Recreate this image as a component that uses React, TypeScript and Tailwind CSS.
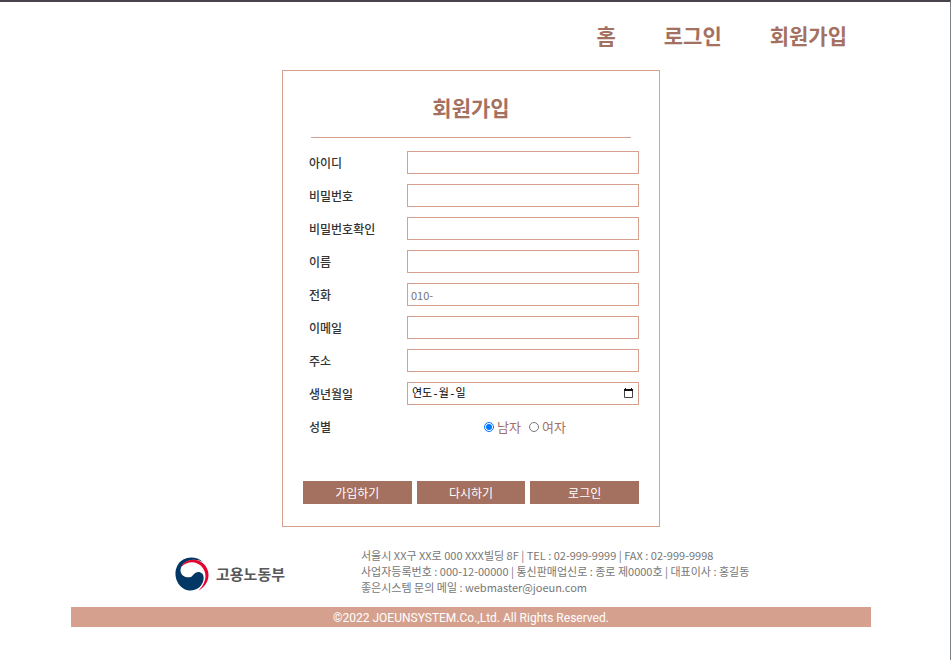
import React from "react";

type Field = { id: string; label: string; type: string; placeholder?: string };

const fields: Field[] = [
  { id: "userid", label: "아이디", type: "text" },
  { id: "password", label: "비밀번호", type: "password" },
  { id: "password2", label: "비밀번호확인", type: "password" },
  { id: "name", label: "이름", type: "text" },
  { id: "phone", label: "전화", type: "tel", placeholder: "010-" },
  { id: "email", label: "이메일", type: "email" },
  { id: "address", label: "주소", type: "text" },
];

const inputClass =
  "h-[23px] w-full border border-[#d5a18e] bg-white px-[3px] text-[11px] text-[#333] outline-none placeholder:text-[#757575]";

function Row({ id, label, children }: { id: string; label: string; children: React.ReactNode }) {
  return (
    <div className="flex h-[23px] items-center">
      <label htmlFor={id} className="w-[104px] shrink-0 pl-1.5 text-[12px] font-medium text-[#333]">
        {label}
      </label>
      <div className="relative min-w-0 flex-1">{children}</div>
    </div>
  );
}

function Emblem() {
  return (
    <svg viewBox="0 0 102 102" className="size-[34px] shrink-0" aria-hidden="true">
      <path
        d="M84 15C60 -6 22 -2 7 26C-8 56 8 92 38 100C64 104 86 86 86 62C86 48 73 41 62 47C53 52 52 61 41 61C26 61 14 50 17 36C22 10 56 0 84 15Z"
        fill="#003764"
      />
      <path
        d="M19 29C30 6 64 2 84 19C111 42 104 84 70 101C92 80 98 52 83 32C68 11 38 10 19 29Z"
        fill="#e4032e"
      />
    </svg>
  );
}

export default function App() {
  return (
    <div className="min-h-screen border-t-2 border-r border-t-[#48434c] border-r-[#7b8288] bg-white pr-2 font-['Noto_Sans_CJK_KR',sans-serif] text-[#a4705f]">
      <div className="mx-auto max-w-[800px]">
        <header>
          <nav className="flex h-[68px] items-center justify-end gap-12 pr-6 text-[21px] font-bold">
            <a href="#home">홈</a>
            <a href="#login">로그인</a>
            <a href="#join">회원가입</a>
          </nav>
        </header>

        <main>
          <form className="mx-auto w-full max-w-[378px] border border-[#d5a18e] px-5 pb-[22px]">
            <h1 className="mx-2 flex h-[67px] items-center justify-center border-b border-[#d5a18e] pt-2 text-[21px] font-bold">
              회원가입
            </h1>
            <div className="mt-[13px] flex flex-col gap-2.5">
              {fields.map((f) => (
                <Row key={f.id} id={f.id} label={f.label}>
                  <input id={f.id} type={f.type} placeholder={f.placeholder} className={`block ${inputClass}`} />
                </Row>
              ))}
              <Row id="birth" label="생년월일">
                <input
                  id="birth"
                  type="text"
                  placeholder="연도-월-일"
                  className="block h-[23px] w-full border border-[#d5a18e] bg-white px-1 font-['Liberation_Mono','Noto_Sans_CJK_KR',monospace] text-[11px] text-black outline-none placeholder:text-black"
                />
                <button type="button" aria-label="날짜 선택" className="absolute top-1.5 right-1.5">
                  <svg viewBox="0 0 9 10" className="h-2.5 w-[9px]" aria-hidden="true">
                    <path d="M0.5 2V9.5H8.5V2" fill="none" stroke="#444" />
                    <path d="M0 1H9V3H0ZM1 0H2V1H1ZM7 0H8V1H7Z" fill="#111" />
                  </svg>
                </button>
              </Row>
              <div role="radiogroup" aria-labelledby="gender-label" className="flex h-[23px] items-center">
                <span id="gender-label" className="w-[104px] shrink-0 pl-1.5 text-[12px] font-medium text-[#333]">
                  성별
                </span>
                <div className="flex flex-1 items-center justify-center gap-2 pl-1 text-[13px]">
                  <label className="flex items-center gap-[3px]">
                    <input type="radio" name="gender" defaultChecked className="size-2.5 accent-[#0075ff]" />
                    남자
                  </label>
                  <label className="flex items-center gap-[3px]">
                    <input type="radio" name="gender" className="size-2.5" />
                    여자
                  </label>
                </div>
              </div>
            </div>
            <div className="mt-[43px] grid grid-cols-3 gap-[5px] text-[12px] text-white">
              <button type="submit" className="h-[23px] bg-[#a4705f]">가입하기</button>
              <button type="reset" className="h-[23px] bg-[#a4705f]">다시하기</button>
              <button type="button" className="h-[23px] bg-[#a4705f]">로그인</button>
            </div>
          </form>
        </main>

        <footer className="mt-5">
          <div className="flex h-[60px] items-start">
            <div className="flex w-[290px] shrink-0 items-center gap-[7px] pt-2.5 pl-[104px] text-[15px] font-bold text-[#58585a]">
              <Emblem />
              고용노동부
            </div>
            <address className="text-[11px] leading-4 whitespace-nowrap text-[#777] not-italic">
              서울시 XX구 XX로 000 XXX빌딩 8F | TEL : 02-999-9999 | FAX : 02-999-9998
              <br />
              사업자등록번호 : 000-12-00000 | 통신판매업신로 : 종로 제0000호 | 대표이사 : 홍길동
              <br />
              좋은시스템 문의 메일 : webmaster@joeun.com
            </address>
          </div>
          <p className="h-5 bg-[#d5a18e] text-center font-['Roboto','Noto_Sans_CJK_KR',sans-serif] text-[12px] leading-[22px] text-white">
            ©2022 JOEUNSYSTEM.Co.,Ltd. All Rights Reserved.
          </p>
        </footer>
      </div>
    </div>
  );
}
